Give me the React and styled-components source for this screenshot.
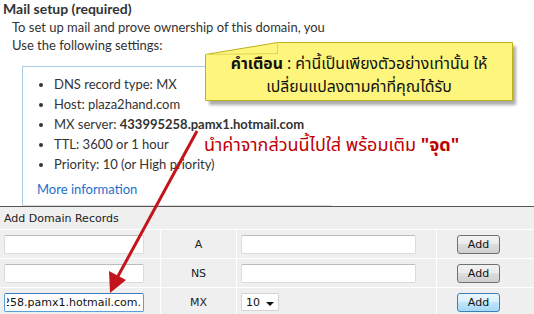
import React, { useLayoutEffect, useRef } from 'react'
import styled, { createGlobalStyle } from 'styled-components'

const GlobalStyle = createGlobalStyle`
  html, body { margin: 0; padding: 0; background: #ffffff; }
  body { width: 534px; height: 314px; overflow: hidden; }
`

const thaiFont = `"Noto Sans Thai", Tahoma, "Noto Sans", "DejaVu Sans", sans-serif`

const Page = styled.div`
  position: relative;
  width: 534px;
  height: 314px;
  overflow: hidden;
  font-family: Lato, "Open Sans", sans-serif;
  color: #333333;
`

const Title = styled.div`
  font-size: 14px;
  font-weight: bold;
  padding-left: 3px;
  height: 18px;
  line-height: 18px;
`

const Intro = styled.div`
  font-size: 13px;
  line-height: 18px;
  padding-left: 12px;
  margin-bottom: 12px;
`

const InfoBox = styled.div`
  margin-left: 22px;
  width: 310px;
  height: 140px;
  border-left: 1px solid #a9cbe6;
  border-top: 1px solid #a9cbe6;
  border-bottom: 1px solid #dcdcdc;
  padding: 7px 0 0 14px;
  box-sizing: border-box;
  font-size: 13px;
`

const List = styled.ul`
  margin: 0;
  padding: 0 0 0 17px;
  line-height: 20px;
`

const Strong = styled.b`
  font-weight: bold;
`

const MoreLink = styled.a`
  display: block;
  color: #1e6fcb;
  text-decoration: none;
  margin-top: 5px;
  line-height: 20px;
`

const Records = styled.div`
  border-top: 1px solid #555555;
  background: #efefef;
  font-family: "DejaVu Sans", Verdana, sans-serif;
  font-size: 11px;
  color: #222;
`

const RecordsTitle = styled.div`
  height: 22px;
  line-height: 24px;
  padding-left: 4px;
`

const Row = styled.div`
  display: grid;
  grid-template-columns: 161px 76px 200px 97px;
  height: 28px;
  border-top: 1px solid #ffffff;
`

const Cell = styled.div`
  display: flex;
  align-items: center;
  justify-content: ${p => (p.$center ? 'center' : 'flex-start')};
  padding-left: ${p => p.$pad || 0}px;
  border-right: ${p => (p.$last ? 'none' : '1px solid #ffffff')};
  box-sizing: border-box;
`

const TextBox = styled.input`
  box-sizing: border-box;
  width: ${p => p.$w}px;
  height: 19px;
  border: 1px solid ${p => (p.$focus ? '#5c9fd8' : '#dcdcdc')};
  border-top-color: ${p => (p.$focus ? '#3d7bbf' : '#bcbcbc')};
  border-radius: 2px;
  background: #ffffff;
  font-family: "DejaVu Sans", Verdana, sans-serif;
  font-size: 11px;
  color: #111;
  padding: 0 2px;
  outline: none;
  caret-color: #000;
`

const Select = styled.div`
  box-sizing: border-box;
  width: 38px;
  height: 18px;
  border: 1px solid #d4d4d4;
  border-radius: 2px;
  background: #ffffff;
  display: flex;
  align-items: center;
  justify-content: space-between;
  padding: 0 4px;
  font-size: 11px;
  color: #111;
`

const Caret = styled.span`
  width: 0;
  height: 0;
  border-left: 4px solid transparent;
  border-right: 4px solid transparent;
  border-top: 4px solid #111;
  margin-top: 3px;
`

const AddButton = styled.button`
  box-sizing: border-box;
  width: 43px;
  height: 19px;
  margin-left: 20px;
  padding: 0;
  border-radius: 3px;
  font-family: "DejaVu Sans", Verdana, sans-serif;
  font-size: 11px;
  color: #111;
  border: 1px solid ${p => (p.$hot ? '#3c7fb1' : '#707070')};
  background: ${p =>
    p.$hot
      ? 'linear-gradient(#eaf6fd 0%, #d9f0fc 45%, #bee6fd 50%, #a7d9f5 100%)'
      : 'linear-gradient(#f2f2f2 0%, #ebebeb 45%, #dddddd 50%, #cfcfcf 100%)'};
`

const Callout = styled.div`
  position: absolute;
  left: 205px;
  top: 42px;
  width: 314px;
  height: 66px;
`

const CalloutShape = styled.svg`
  position: absolute;
  left: 0;
  top: 0;
`

const CalloutText = styled.div`
  position: relative;
  width: 308px;
  padding-top: 11px;
  text-align: center;
  font-family: ${thaiFont};
  font-size: 15.8px;
  line-height: 23px;
  color: #111;
  white-space: nowrap;
`

const Note = styled.div`
  position: absolute;
  left: 204px;
  top: 134px;
  font-family: ${thaiFont};
  font-size: 18px;
  line-height: 24px;
  color: #c00000;
  white-space: nowrap;
`

const Arrow = styled.svg`
  position: absolute;
  left: 0;
  top: 0;
  pointer-events: none;
`

function MxHostInput() {
  const ref = useRef(null)
  useLayoutEffect(() => {
    const el = ref.current
    if (el) {
      el.focus()
      el.setSelectionRange(el.value.length, el.value.length)
      el.scrollLeft = el.scrollWidth
    }
  }, [])
  return <TextBox ref={ref} $w={140} $focus defaultValue="433995258.pamx1.hotmail.com." />
}

export default function App() {
  return (
    <>
      <GlobalStyle />
      <Page>
        <Title>Mail setup (required)</Title>
        <Intro>
          To set up mail and prove ownership of this domain, you
          <br />
          Use the following settings:
        </Intro>
        <InfoBox>
          <List>
            <li>DNS record type: MX</li>
            <li>Host: plaza2hand.com</li>
            <li>
              MX server: <Strong>433995258.pamx1.hotmail.com</Strong>
            </li>
            <li>TTL: 3600 or 1 hour</li>
            <li>Priority: 10 (or High priority)</li>
          </List>
          <MoreLink href="#">More information</MoreLink>
        </InfoBox>

        <Records>
          <RecordsTitle>Add Domain Records</RecordsTitle>
          <Row>
            <Cell $pad={4}><TextBox $w={140} /></Cell>
            <Cell $center>A</Cell>
            <Cell $pad={4}><TextBox $w={175} /></Cell>
            <Cell $last><AddButton>Add</AddButton></Cell>
          </Row>
          <Row>
            <Cell $pad={4}><TextBox $w={140} /></Cell>
            <Cell $center>NS</Cell>
            <Cell $pad={4}><TextBox $w={175} /></Cell>
            <Cell $last><AddButton>Add</AddButton></Cell>
          </Row>
          <Row>
            <Cell $pad={4}><MxHostInput /></Cell>
            <Cell $center>MX</Cell>
            <Cell $pad={4}>
              <Select>10 <Caret /></Select>
            </Cell>
            <Cell $last><AddButton $hot>Add</AddButton></Cell>
          </Row>
        </Records>

        <Callout>
          <CalloutShape width="314" height="66" viewBox="0 0 314 66">
            <defs>
              <filter id="sh" x="-5%" y="-5%" width="115%" height="130%">
                <feGaussianBlur stdDeviation="1.5" />
              </filter>
            </defs>
            <path d="M4 16 L76 4 L311 4 L311 63 L4 63 Z" fill="#8a8a8a" opacity="0.7" filter="url(#sh)" />
            <path d="M0.5 12.5 L72.5 0.5 L307.5 0.5 L307.5 58.5 L0.5 58.5 Z" fill="#fdf57c" stroke="#bdb11a" />
            <path d="M72.5 0.5 L72.5 11.5 L0.5 12.5" fill="none" stroke="#d8cf4a" strokeWidth="0.8" />
          </CalloutShape>
          <CalloutText>
            <b>คำเตือน</b> : ค่านี้เป็นเพียงตัวอย่างเท่านั้น ให้
            <br />
            เปลี่ยนแปลงตามค่าที่คุณได้รับ
          </CalloutText>
        </Callout>

        <Note>
          นำค่าจากส่วนนี้ไปใส่ พร้อมเติม <b>"จุด"</b>
        </Note>

        <Arrow width="534" height="314" viewBox="0 0 534 314">
          <line x1="197" y1="131" x2="117" y2="278" stroke="#c4141b" strokeWidth="3" />
          <polygon points="110,293 126,280 109,271" fill="#c4141b" />
        </Arrow>
      </Page>
    </>
  )
}
